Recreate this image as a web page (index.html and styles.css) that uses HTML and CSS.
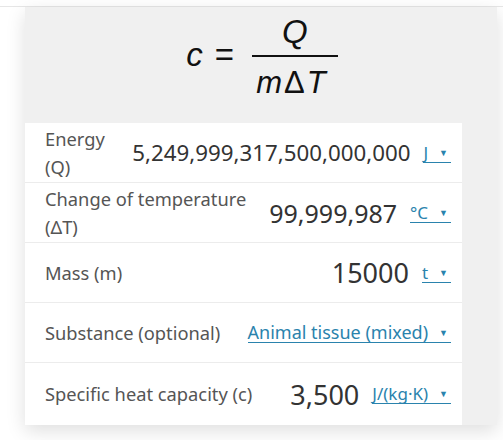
FILE: index.html
```html
<!DOCTYPE html>
<html lang="en">
<head>
<meta charset="utf-8">
<title>Specific heat calculator</title>
<link rel="stylesheet" href="styles.css">
</head>
<body>
<div class="page">
  <div class="card">
    <div class="formula">
      <span class="var">c</span>
      <span class="eq">=</span>
      <span class="frac">
        <span class="num">Q</span>
        <span class="den">m<span class="up">&Delta;</span>T</span>
      </span>
    </div>
    <div class="panel">
      <div class="row">
        <div class="label narrow">Energy (Q)</div>
        <div class="field">
          <span class="value v-small">5,249,999,317,500,000,000</span>
          <span class="unit">J<span class="tri">&#9660;</span></span>
        </div>
      </div>
      <div class="row">
        <div class="label mid">Change of temperature (&Delta;T)</div>
        <div class="field">
          <span class="value v-mid">99,999,987</span>
          <span class="unit">&deg;C<span class="tri">&#9660;</span></span>
        </div>
      </div>
      <div class="row">
        <div class="label">Mass (m)</div>
        <div class="field">
          <span class="value">15000</span>
          <span class="unit">t<span class="tri">&#9660;</span></span>
        </div>
      </div>
      <div class="row">
        <div class="label">Substance (optional)</div>
        <div class="field">
          <span class="unit big">Animal tissue (mixed)<span class="tri">&#9660;</span></span>
        </div>
      </div>
      <div class="row last">
        <div class="label">Specific heat capacity (c)</div>
        <div class="field">
          <span class="value">3,500</span>
          <span class="unit">J/(kg&middot;K)<span class="tri">&#9660;</span></span>
        </div>
      </div>
    </div>
  </div>
</div>
</body>
</html>
```
FILE: styles.css
```css
html, body {
  margin: 0;
  padding: 0;
  background: #ffffff;
}
body {
  font-family: "Noto Sans", "Open Sans", sans-serif;
}
.page {
  margin-top: 6px;
  border-top: 1px solid #e6e6e6;
  padding: 0 6px 15px 25px;
}
.card {
  background: #f0f0f0;
  box-shadow: 0 6px 18px rgba(0, 0, 0, 0.13);
}
.formula {
  height: 116px;
  box-sizing: border-box;
  padding-top: 8px;
  display: flex;
  align-items: flex-start;
  justify-content: center;
  font-family: "Liberation Sans", Arial, sans-serif;
  font-style: italic;
  font-size: 33px;
  color: #111;
  padding-left: 2px;
}
.var,
.eq {
  line-height: 34px;
  margin-top: 23px;
}
.var {
  margin-right: 12px;
}
.eq {
  font-style: normal;
  margin-right: 18px;
}
.frac {
  display: flex;
  flex-direction: column;
  align-items: center;
}
.num {
  line-height: 34px;
  padding: 0 0 6px 0;
}
.den {
  align-self: stretch;
  border-top: 2px solid #111;
  font-size: 31px;
  line-height: 32px;
  letter-spacing: 2px;
  padding: 10px 10px 0 4px;
}
.up {
  font-style: normal;
}
.panel {
  width: 437px;
  background: #ffffff;
}
.row {
  display: flex;
  align-items: center;
  justify-content: space-between;
  min-height: 60px;
  padding: 0 11px 0 20px;
  border-bottom: 1px solid #ececec;
  box-sizing: border-box;
}
.row.last {
  border-bottom: none;
  min-height: 62px;
}
.label {
  font-size: 18.3px;
  line-height: 28px;
  color: #555;
}
.label.narrow {
  width: 70px;
}
.label.mid {
  width: 215px;
}
.field {
  display: flex;
  align-items: center;
  gap: 13px;
}
.value {
  font-size: 27px;
  color: #333;
}
.value.v-mid {
  font-size: 25px;
}
.value.v-small {
  font-size: 22.3px;
}
.unit {
  display: inline-flex;
  align-items: center;
  color: #2a83ad;
  font-size: 17px;
  line-height: 19px;
  border-bottom: 1px solid #2a83ad;
  white-space: nowrap;
}
.unit.big {
  font-size: 18px;
}
.tri {
  font-size: 9px;
  line-height: 9px;
  margin: 0 3px 0 11px;
}
```
